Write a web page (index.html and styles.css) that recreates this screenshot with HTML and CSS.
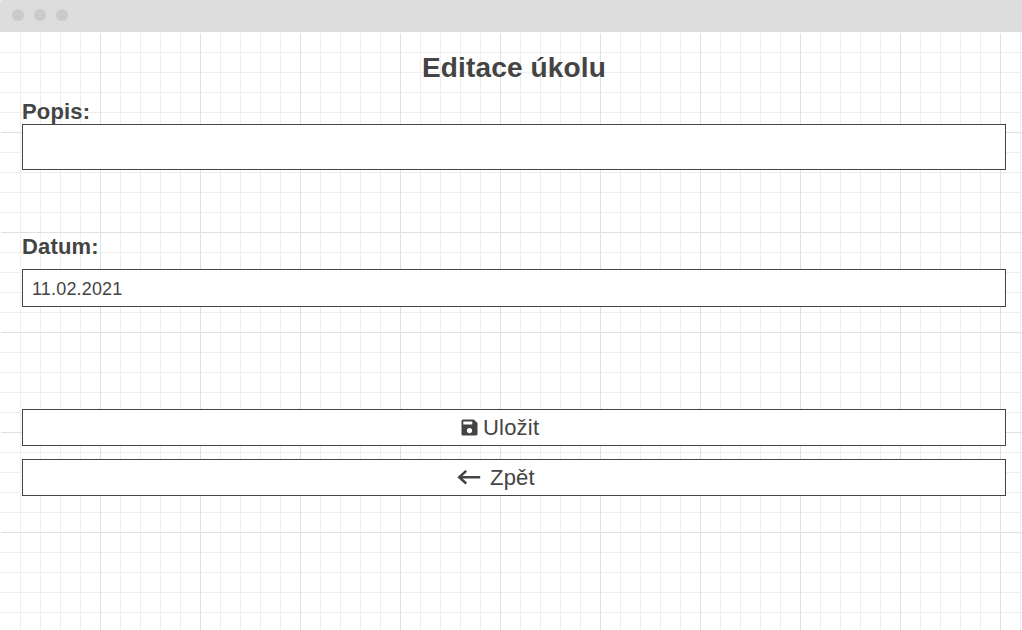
FILE: index.html
```
<!DOCTYPE html>
<html lang="cs">
<head>
<meta charset="utf-8">
<title>Editace úkolu</title>
<link rel="stylesheet" href="styles.css">
</head>
<body>
<header class="titlebar"><span class="dot"></span><span class="dot"></span><span class="dot"></span></header>
<main class="canvas">
<form class="form">
<h1 class="title">Editace úkolu</h1>
<label class="label" for="popis">Popis:</label>
<input class="field field-popis" id="popis" type="text">
<label class="label label-datum" for="datum">Datum:</label>
<input class="field field-datum" id="datum" type="text" value="11.02.2021">
<button class="button save" type="button">
<svg class="icon-save" viewBox="0 0 17 17"><path fill-rule="evenodd" d="M2 .5h10.8L16.5 4v11a1.5 1.5 0 0 1-1.5 1.5H2A1.5 1.5 0 0 1 .5 15V2A1.5 1.5 0 0 1 2 .5zM2.3 2.4v3.2h9V2.4zM8.5 9a2.6 2.6 0 1 0 0 5.2a2.6 2.6 0 0 0 0-5.2z"/></svg>
<span>Uložit</span></button>
<button class="button back" type="button">
<svg class="icon-back" viewBox="0 0 24 16"><path d="M9.2 .9L2.2 7.2l7 6.3M2.5 7.2H23.2"/></svg>
<span>Zpět</span></button>
</form>
</main>
</body>
</html>
```
FILE: styles.css
```
* { box-sizing: border-box; }
body {
  margin: 0;
  height: 630px;
  overflow: hidden;
  background: #fff;
  color: #444;
  font-family: "Liberation Sans", Arial, sans-serif;
}
.titlebar {
  display: flex;
  align-items: center;
  gap: 10px;
  height: 32px;
  padding: 0 12px 2px;
  background: #ddd;
  border-top-left-radius: 2px;
}
.dot {
  width: 12px;
  height: 12px;
  border-radius: 50%;
  background: #cacaca;
}
.canvas {
  margin: 1px 0 0 1px;
  height: 597px;
  background-image:
    linear-gradient(to right, transparent 99px, #e0e0e0 99px),
    linear-gradient(to bottom, transparent 99px, #e0e0e0 99px),
    linear-gradient(to right, transparent 19px, #eee 19px),
    linear-gradient(to bottom, transparent 19px, #eee 19px);
  background-size: 100px 100px, 100px 100px, 20px 20px, 20px 20px;
}
.form {
  display: flex;
  flex-direction: column;
  padding: 19px 16px 0 21px;
}
.title {
  margin: 0;
  height: 48px;
  font-size: 28px;
  line-height: 32px;
  letter-spacing: 0.15px;
  text-align: center;
}
.label {
  height: 24px;
  font-size: 22px;
  font-weight: bold;
  line-height: 24px;
  letter-spacing: 0.15px;
}
.field {
  width: 100%;
  margin: 0;
  padding: 2px 9px 0;
  border: 1px solid #444;
  border-radius: 0;
  background: #fff;
  color: #444;
  font: 18px "Liberation Sans", Arial, sans-serif;
  letter-spacing: 0.17px;
}
.field-popis { height: 46px; }
.label-datum { margin: 65px 0 10px; }
.field-datum { height: 38px; }
.button {
  display: flex;
  align-items: center;
  height: 37px;
  padding: 0;
  border: 1px solid #444;
  background: #fff;
  color: #444;
  font: 22px/35px "Liberation Sans", Arial, sans-serif;
  letter-spacing: 0.2px;
}
.save {
  gap: 5px;
  margin: 102px 0 13px;
  padding-left: 438px;
}
.back {
  gap: 9px;
  padding-left: 434px;
}
.icon-save { width: 17px; height: 17px; fill: #444; }
.icon-back {
  width: 24px;
  height: 16px;
  fill: none;
  stroke: #444;
  stroke-width: 2.5;
}
```
